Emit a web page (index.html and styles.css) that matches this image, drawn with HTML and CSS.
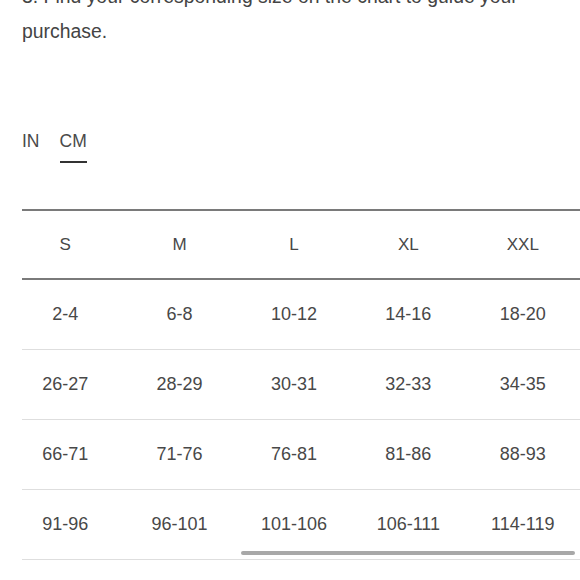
FILE: index.html
```html
<!DOCTYPE html>
<html lang="en">
<head>
<meta charset="utf-8">
<title>Size chart</title>
<link rel="stylesheet" href="styles.css">
</head>
<body>
<main class="page">
  <p class="intro">3. Find your corresponding size on the chart to guide your purchase.</p>
  <nav class="units">
    <span class="unit">IN</span>
    <span class="unit unit-active">CM</span>
  </nav>
  <div class="chart">
    <div class="chart-clip">
      <table class="sizes">
        <thead>
          <tr><th>S</th><th>M</th><th>L</th><th>XL</th><th>XXL</th></tr>
        </thead>
        <tbody>
          <tr><td>2-4</td><td>6-8</td><td>10-12</td><td>14-16</td><td>18-20</td></tr>
          <tr><td>26-27</td><td>28-29</td><td>30-31</td><td>32-33</td><td>34-35</td></tr>
          <tr><td>66-71</td><td>71-76</td><td>76-81</td><td>81-86</td><td>88-93</td></tr>
          <tr><td>91-96</td><td>96-101</td><td>101-106</td><td>106-111</td><td>114-119</td></tr>
        </tbody>
      </table>
    </div>
    <div class="scroll-thumb"></div>
  </div>
</main>
</body>
</html>
```

FILE: styles.css
```css
html, body {
  margin: 0;
  padding: 0;
  background: #ffffff;
}

body {
  font-family: "Liberation Sans", Arial, sans-serif;
  color: #444444;
  overflow: hidden;
}

.page {
  padding-left: 22px;
}

.intro {
  margin: -21px 0 0 0;
  padding-right: 22px;
  font-size: 19.4px;
  line-height: 35px;
  color: #444444;
}

.units {
  display: flex;
  gap: 20px;
  margin-top: 82px;
}

.unit {
  font-size: 17.5px;
  line-height: 20px;
  color: #4a4a4a;
  padding-bottom: 10px;
  border-bottom: 2px solid transparent;
}

.unit-active {
  border-bottom-color: #333333;
}

.chart {
  position: relative;
  margin-top: 46px;
}

.chart-clip {
  display: flex;
  justify-content: flex-end;
  overflow: hidden;
}

.sizes {
  flex: none;
  width: 572px;
  table-layout: fixed;
  border-collapse: collapse;
  border-top: 2px solid #7a7a7a;
  color: #484848;
}

.sizes th,
.sizes td {
  text-align: center;
  padding: 0;
  font-weight: normal;
}

.sizes th {
  height: 67px;
  font-size: 17px;
  border-bottom: 2px solid #7a7a7a;
}

.sizes td {
  height: 69px;
  font-size: 18px;
  border-bottom: 1px solid #dedede;
}

.scroll-thumb {
  position: absolute;
  left: 219px;
  right: 5px;
  bottom: 5px;
  height: 4px;
  border-radius: 2px;
  background: #a8a8a8;
}
```
